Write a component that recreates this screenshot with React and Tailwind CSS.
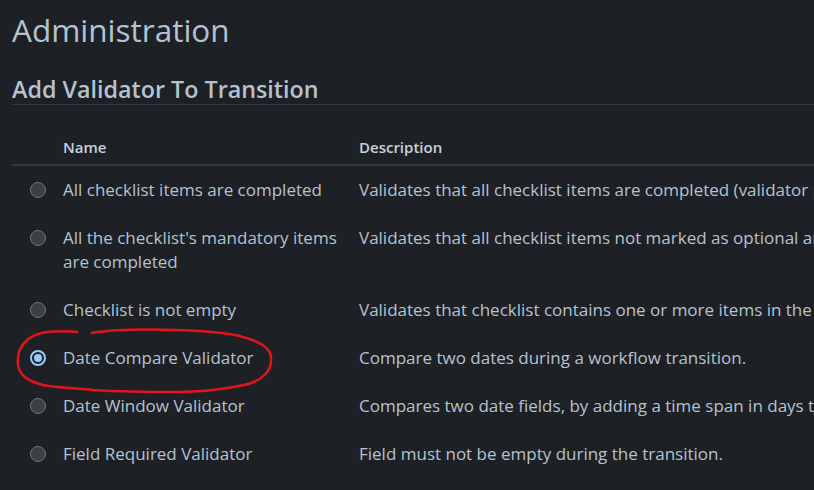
const rows = [
  { name: "All checklist items are completed", desc: "Validates that all checklist items are completed (validator passes if checklist is empty)." },
  { name: "All the checklist's mandatory items are completed", desc: "Validates that all checklist items not marked as optional are completed." },
  { name: "Checklist is not empty", desc: "Validates that checklist contains one or more items in the issue." },
  { name: "Date Compare Validator", desc: "Compare two dates during a workflow transition.", checked: true },
  { name: "Date Window Validator", desc: "Compares two date fields, by adding a time span in days to the second date." },
  { name: "Field Required Validator", desc: "Field must not be empty during the transition." },
];

function Radio({ checked }) {
  if (checked) {
    return (
      <span className="flex h-4 w-4 items-center justify-center rounded-full border-2 border-[#99c8ff] bg-[#1d2125]">
        <span className="h-2 w-2 rounded-full bg-[#99c8ff]" />
      </span>
    );
  }
  return <span className="block h-4 w-4 rounded-full border-[1.5px] border-[#6f7378] bg-[#3c3f43]" />;
}

export default function App() {
  return (
    <div className="relative h-[490px] w-[814px] overflow-hidden bg-[#1d2125] text-[#b6c2cf] font-['Open_Sans',sans-serif]">
      <div className="pl-3">
        <h1 className="pt-[10px] text-[31.5px] leading-[40px] text-[#b6c2cf]">Administration</h1>
        <h2 className="mt-6 border-b border-[#30363d] text-[23.3px] font-semibold leading-[30px] text-[#b6c2cf]">
          Add Validator To Transition
        </h2>

        <div className="mt-6 w-[1100px]">
          <div className="flex border-b-2 border-[#343a41] pb-[7px] pt-2 text-[15px] font-semibold leading-5 text-[#c7d1db]">
            <div className="w-[51px]" />
            <div className="w-[296px]">Name</div>
            <div className="flex-1">Description</div>
          </div>

          {rows.map(r => (
            <div key={r.name} className="flex py-3 text-[17px] leading-6">
              <div className="flex h-6 w-[51px] items-center pl-[18px]">
                <Radio checked={r.checked} />
              </div>
              <div className="w-[296px] pr-4">{r.name}</div>
              <div className="flex-1 whitespace-nowrap">{r.desc}</div>
            </div>
          ))}
        </div>
      </div>

      {/* red marker circle drawn over the selected row */}
      <svg className="pointer-events-none absolute left-0 top-0" width="814" height="490" fill="none">
        <path
          d="M92 333 C110 330 140 329 177 330 C205 331 230 333 243 337 C258 341 271 348 271 358 C272 370 263 381 244 385 C220 390 200 392 177 392 C140 392 110 391 93 390 C70 388 52 387 43 385 C32 382 25 379 22 374 C17 368 17 360 19 352 C23 341 33 334 47 332 C58 331 68 331 77 332"
          stroke="#e3141a"
          strokeWidth="2.5"
          strokeLinecap="round"
        />
      </svg>
    </div>
  );
}
